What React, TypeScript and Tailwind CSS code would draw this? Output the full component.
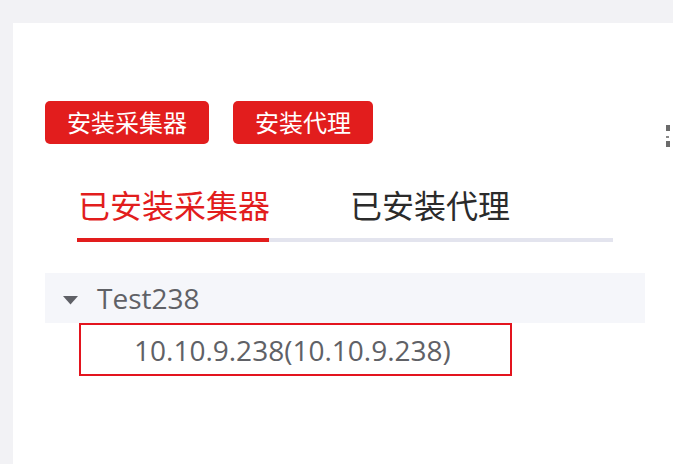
import React from "react";

export default function App() {
  const font = { fontFamily: '"Open Sans", "Noto Sans CJK SC", sans-serif' };
  return (
    <div
      className="relative w-[673px] h-[464px] overflow-hidden bg-[#f2f2f5] pt-[23px] pl-[13px]"
      style={font}
    >
      <div className="h-full bg-white pl-[32px] pt-[78px]">
        <div className="flex gap-[24px]">
          <button className="h-[43px] px-[22px] rounded-[5px] bg-[#e21d1d] text-white text-[24px] leading-none">
            安装采集器
          </button>
          <button className="h-[43px] px-[22px] rounded-[5px] bg-[#e21d1d] text-white text-[24px] leading-none">
            安装代理
          </button>
        </div>

        <div className="ml-[32px] mt-[46px] w-[536px] flex flex-col">
          <div className="flex items-end">
            <div className="w-[192px] flex flex-col">
              <div className="pl-[1px] text-[32px] leading-none text-[#e21d1d] pb-[16px] whitespace-nowrap">
                已安装采集器
              </div>
              <div className="h-[4px] bg-[#e21d1d]" />
            </div>
            <div className="flex-1 flex flex-col">
              <div className="pl-[81px] text-[32px] leading-none text-[#2b2b2b] pb-[16px] whitespace-nowrap">
                已安装代理
              </div>
              <div className="h-[4px] bg-[#e3e4ee]" />
            </div>
          </div>
        </div>

        <div className="mt-[31px] w-[600px]">
          <div className="h-[50px] bg-[#f5f6fa] flex items-center pl-[18px]">
            <svg width="15" height="9" viewBox="0 0 15 9" className="mt-[5px]">
              <polygon points="0,0 15,0 7.5,8.5" fill="#5f6066" />
            </svg>
            <span className="ml-[19px] text-[28px] leading-none text-[#606166]">
              Test238
            </span>
          </div>
          <div className="ml-[34px] w-[433px] h-[53px] border-2 border-solid border-[#e3141e] flex items-center pl-[53px]">
            <span className="text-[28px] leading-none text-[#606166] whitespace-nowrap">
              10.10.9.238(10.10.9.238)
            </span>
          </div>
        </div>
      </div>

      <div className="absolute left-[666px] top-[125px] w-[4px] h-[6px] bg-[#6b6b6b]" />
      <div className="absolute left-[666px] top-[136px] w-[3px] h-[2px] bg-[#8a8a8a]" />
      <div className="absolute left-[666px] top-[141px] w-[4px] h-[6px] bg-[#6b6b6b]" />
    </div>
  );
}
